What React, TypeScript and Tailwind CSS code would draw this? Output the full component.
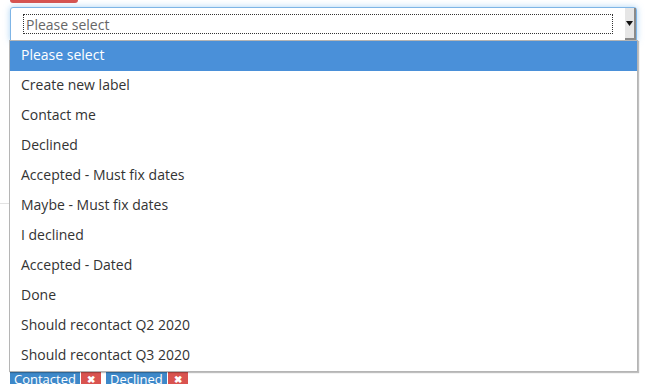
import React from "react";

const options = [
  "Please select",
  "Create new label",
  "Contact me",
  "Declined",
  "Accepted - Must fix dates",
  "Maybe - Must fix dates",
  "I declined",
  "Accepted - Dated",
  "Done",
  "Should recontact Q2 2020",
  "Should recontact Q3 2020",
];

function Tag({ label }: { label: string }) {
  return (
    <span className="flex h-[18px] shrink-0 items-stretch text-[13px] leading-[14px] text-white">
      <span className="bg-[#3d88c9] px-[4px]">{label}</span>
      <span className="ml-px flex w-[20px] shrink-0 items-start justify-center bg-[#d9534f] pt-[1px] text-[10px] font-bold leading-[12px]">✖</span>
    </span>
  );
}

export default function App() {
  return (
    <div className="relative h-[384px] w-[648px] overflow-hidden bg-white font-['Open_Sans',sans-serif]">
      <div className="ml-[10px] h-[3px] w-[68px] rounded-b-[3px] bg-[#d9534f]" />

      <div className="ml-[10px] mt-[4px] flex h-[34px] w-[627px] items-stretch rounded-t-[3px] border border-[#7fb5e6] bg-white shadow-[0_0_6px_rgba(102,175,233,0.55)]">
        <div className="flex flex-1 items-center pl-[12px] pr-[12px]">
          <div className="flex h-[20px] flex-1 items-center border border-dotted border-[#333] pl-[2px] text-[14px] text-[#666]">
            Please select
          </div>
        </div>
        <div className="flex w-[11px] items-center justify-center border-b-2 border-r-2 border-[#8a8a8a] bg-[#e6e6e6]">
          <svg width="7" height="5" viewBox="0 0 7 5">
            <path d="M0 0h7L3.5 5z" fill="#111" />
          </svg>
        </div>
      </div>

      <div className="flex h-[331px] flex-col pt-[162px]">
        <div className="h-px w-[10px] bg-[#e3e3e3]" />
      </div>

      <div className="ml-[10px] flex gap-[5px]">
        <Tag label="Contacted" />
        <Tag label="Declined" />
      </div>

      <div className="absolute left-[9px] top-[40px] w-[629px] border border-[#b5b5b5] bg-white shadow-[1px_1px_1px_rgba(0,0,0,0.25)]">
        {options.map((o, i) => (
          <div
            key={o}
            className={
              "flex h-[30px] items-center pl-[11px] text-[14px] leading-[18px] " +
              (i === 0 ? "bg-[#4a90d9] text-white" : "text-[#333]")
            }
          >
            <span className="-mt-[2px]">{o}</span>
          </div>
        ))}
      </div>
    </div>
  );
}
